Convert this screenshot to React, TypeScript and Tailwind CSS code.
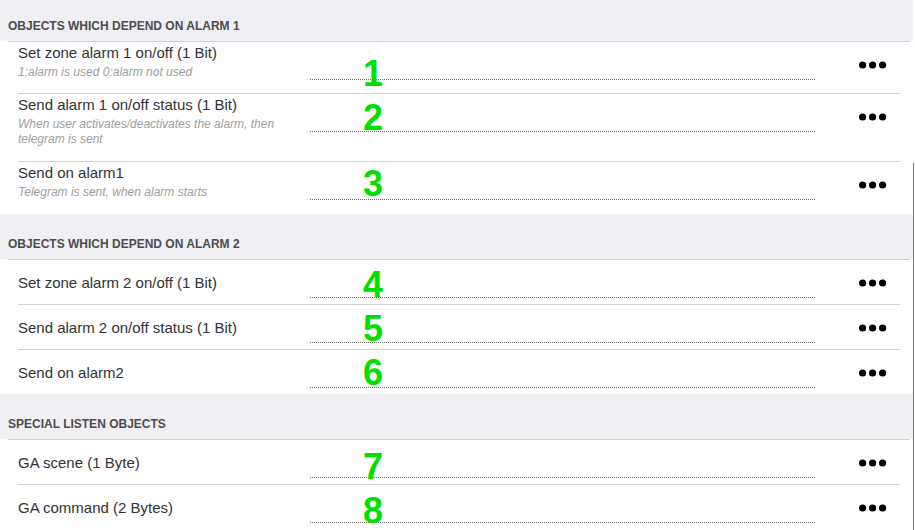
import React from "react";

type Row = {
  title: string;
  desc?: string[];
  num: string;
  numTop: number;
  pb?: number;
};

type Section = {
  header: string;
  first?: boolean;
  rows: Row[];
};

const sections: Section[] = [
  {
    header: "OBJECTS WHICH DEPEND ON ALARM 1",
    first: true,
    rows: [
      { title: "Set zone alarm 1 on/off (1 Bit)", desc: ["1:alarm is used 0:alarm not used"], num: "1", numTop: 14, pb: 13 },
      {
        title: "Send alarm 1 on/off status (1 Bit)",
        desc: ["When user activates/deactivates the alarm, then", "telegram is sent"],
        num: "2",
        numTop: 6,
        pb: 14,
      },
      { title: "Send on alarm1", desc: ["Telegram is sent, when alarm starts"], num: "3", numTop: 4, pb: 14 },
    ],
  },
  {
    header: "OBJECTS WHICH DEPEND ON ALARM 2",
    rows: [
      { title: "Set zone alarm 2 on/off (1 Bit)", num: "4", numTop: 7 },
      { title: "Send alarm 2 on/off status (1 Bit)", num: "5", numTop: 6 },
      { title: "Send on alarm2", num: "6", numTop: 5 },
    ],
  },
  {
    header: "SPECIAL LISTEN OBJECTS",
    rows: [
      { title: "GA scene (1 Byte)", num: "7", numTop: 9 },
      { title: "GA command (2 Bytes)", num: "8", numTop: 8 },
    ],
  },
];

function Dots() {
  return (
    <svg width="28" height="8" viewBox="0 0 28 8" className="block">
      <circle cx="3.6" cy="4" r="3.6" fill="#000" />
      <circle cx="13.6" cy="4" r="3.6" fill="#000" />
      <circle cx="23.6" cy="4" r="3.6" fill="#000" />
    </svg>
  );
}

function RowView({ row, last }: { row: Row; last: boolean }) {
  const hasDesc = !!row.desc;
  return (
    <div className={`ml-[18px] w-[882px] flex items-start ${last ? "" : "border-b border-[#d2d2d2]"}`}>
      <div
        className={`w-[292px] shrink-0 ${hasDesc ? "pt-[2px]" : "pt-[14px] pb-[12px]"}`}
        style={hasDesc ? { paddingBottom: row.pb } : undefined}
      >
        <div className="text-[15px] leading-[18px] text-[#333333]">{row.title}</div>
        {row.desc && (
          <div className="mt-[3px] text-[12px] leading-[15px] italic text-[#9e9e9e]">
            {row.desc.map((d, i) => (
              <div key={i}>{d}</div>
            ))}
          </div>
        )}
      </div>
      <div className="relative w-[505px] shrink-0 h-[38px] border-b border-dotted border-[#707070]">
        <div
          className="absolute left-[53px] w-[20px] text-center text-[36px] leading-[36px] font-bold text-[#00e000]"
          style={{ top: row.numTop }}
        >
          {row.num}
        </div>
      </div>
      <div className="ml-[44px] mt-[19px]">
        <Dots />
      </div>
    </div>
  );
}

export default function App() {
  return (
    <div
      className="relative w-[915px] h-[530px] overflow-hidden bg-white"
      style={{ fontFamily: '"Liberation Sans", Arial, sans-serif' }}
    >
      <div className="w-[913px]">
        {sections.map((s, si) => (
          <div key={si}>
            <div
              className={`bg-[#efeff4] flex items-end pl-2 pb-[9px] ${s.first ? "h-[41px]" : "h-[45px]"}`}
            >
              <span className="text-[12px] leading-[12px] font-bold text-[#4d4d4d]">{s.header}</span>
            </div>
            <div className="ml-2 mr-[3px] h-px bg-[#cfcfcf]" />
            {s.rows.map((r, ri) => (
              <RowView key={ri} row={r} last={ri === s.rows.length - 1} />
            ))}
          </div>
        ))}
      </div>
      <div className="absolute left-[913px] top-[163px] w-px h-[367px] bg-[#7a7a7a]" />
    </div>
  );
}
